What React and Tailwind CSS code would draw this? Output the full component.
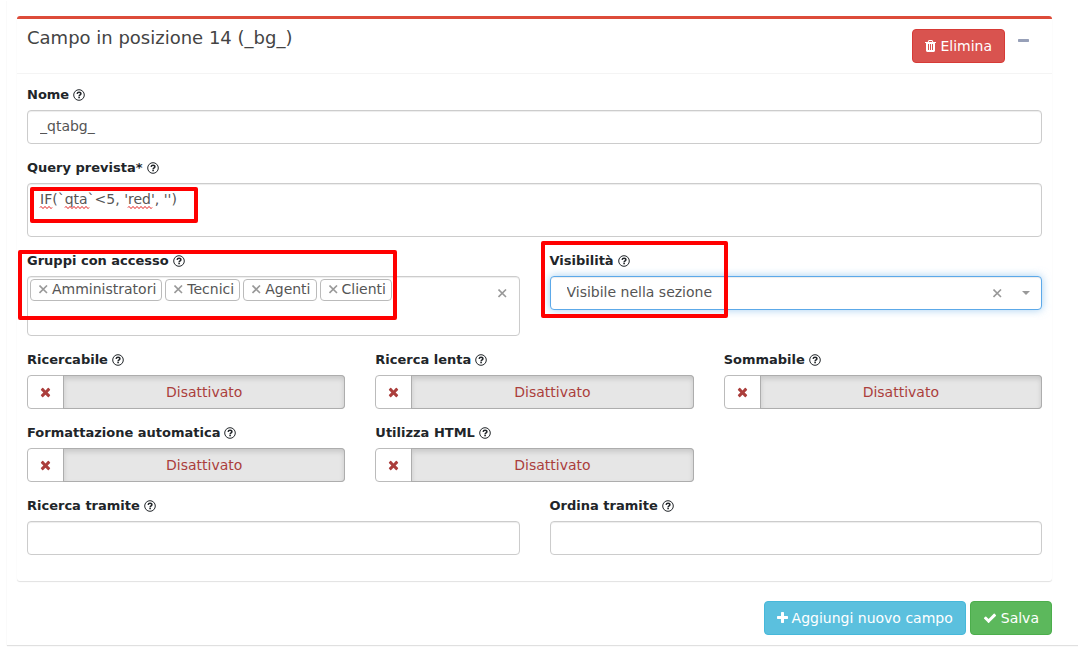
import React, { useState } from "react";

const ICONS = {
  plus: {
    box: "192 0 1408 1792",
    width: "w-[11px]",
    d: "M1600 736v192q0 40-28 68t-68 28h-416v416q0 40-28 68t-68 28h-192q-40 0-68-28t-28-68v-416h-416q-40 0-68-28t-28-68v-192q0-40 28-68t68-28h416v-416q0-40 28-68t68-28h192q40 0 68 28t28 68v416h416q40 0 68 28t28 68z",
  },
  times: {
    box: "192 0 1408 1792",
    width: "w-[11px]",
    d: "M1490 1322q0 40-28 68l-136 136q-28 28-68 28t-68-28l-294-294-294 294q-28 28-68 28t-68-28l-136-136q-28-28-28-68t28-68l294-294-294-294q-28-28-28-68t28-68l136-136q28-28 68-28t68 28l294 294 294-294q28-28 68-28t68 28l136 136q28 28 28 68t-28 68l-294 294 294 294q28 28 28 68z",
  },
  check: {
    box: "0 0 1792 1792",
    width: "w-[14px]",
    d: "M1671 566q0 40-28 68l-724 724-136 136q-28 28-68 28t-68-28l-136-136-362-362q-28-28-28-68t28-68l136-136q28-28 68-28t68 28l294 295 656-657q28-28 68-28t68 28l136 136q28 28 28 68z",
  },
  minus: {
    box: "192 0 1408 1792",
    width: "w-[11px]",
    d: "M1600 736v192q0 40-28 68t-68 28h-1216q-40 0-68-28t-28-68v-192q0-40 28-68t68-28h1216q40 0 68 28t28 68z",
  },
  trash: {
    box: "192 0 1408 1792",
    width: "w-[11px]",
    d: "M704 1376v-704q0-14-9-23t-23-9h-64q-14 0-23 9t-9 23v704q0 14 9 23t23 9h64q14 0 23-9t9-23zm256 0v-704q0-14-9-23t-23-9h-64q-14 0-23 9t-9 23v704q0 14 9 23t23 9h64q14 0 23-9t9-23zm256 0v-704q0-14-9-23t-23-9h-64q-14 0-23 9t-9 23v704q0 14 9 23t23 9h64q14 0 23-9t9-23zm-544-992h448l-48-117q-7-9-17-11h-317q-10 2-17 11zm928 32v64q0 14-9 23t-23 9h-96v948q0 83-47 143.5t-113 60.5h-832q-66 0-113-58.5t-47-141.5v-952h-96q-14 0-23-9t-9-23v-64q0-14 9-23t23-9h309l70-167q15-37 54-63t79-26h320q40 0 79 26t54 63l70 167h309q14 0 23 9t9 23z",
  },
};

function Icon({ name }) {
  const { box, width, d } = ICONS[name];
  return (
    <svg viewBox={box} className={`h-[14px] shrink-0 fill-current ${width}`} aria-hidden="true">
      <path d={d} />
    </svg>
  );
}

function HelpIcon() {
  return (
    <svg viewBox="0 0 12 13" className="h-[13px] w-3 shrink-0" fill="none" stroke="currentColor" aria-hidden="true">
      <circle cx="6" cy="6" r="5.3" strokeWidth="1" />
      <path d="M4.1 4.8C4.3 3.6 5 3.2 6 3.2c1.1 0 1.9.6 1.9 1.5 0 1.1-1.8 1.2-1.8 2.5" strokeWidth="1.5" />
      <path d="M6.1 7.8v1.5" strokeWidth="1.6" />
    </svg>
  );
}

function Cross() {
  return (
    <svg viewBox="0 0 9 9" className="size-[9px] shrink-0" stroke="currentColor" strokeWidth="1.6" aria-hidden="true">
      <path d="M0.5 0.5L8 8M8 0.5L0.5 8" />
    </svg>
  );
}

function Field({ id, label, children }) {
  return (
    <div className="relative min-w-0">
      <label htmlFor={id} className="mb-[5px] flex h-[19px] items-center gap-1 text-[13px] font-bold text-[#212529]">
        {label}
        <HelpIcon />
      </label>
      {children}
    </div>
  );
}

const BOX = "rounded border border-[#ccc] bg-white shadow-[inset_0_1px_1px_rgba(0,0,0,0.075)]";

function TextField({ id, label, value = "" }) {
  return (
    <Field id={id} label={label}>
      <input id={id} type="text" defaultValue={value} className={`${BOX} block h-[34px] w-full px-3 pb-0.5 text-[#555] outline-none`} />
    </Field>
  );
}

function Toggle({ id, label }) {
  const [on, setOn] = useState(false);
  return (
    <Field id={id} label={label}>
      <input id={id} type="checkbox" className="peer sr-only" checked={on} onChange={() => setOn(!on)} />
      <label
        htmlFor={id}
        className="flex h-[34px] cursor-pointer rounded border border-[#bbb] bg-white text-[#ab3e3c] peer-focus-visible:border-[#66afe9]"
      >
        <span className="flex w-9 shrink-0 items-center justify-center border-r border-[#adadad]">
          <Icon name="times" />
        </span>
        <span className="flex flex-1 items-center justify-center rounded-r-[3px] bg-[#e6e6e6] shadow-[inset_0_3px_5px_rgba(0,0,0,0.125),0_0_0_1px_#adadad]">
          {on ? "Attivato" : "Disattivato"}
        </span>
      </label>
    </Field>
  );
}

function Highlight({ className }) {
  return <div aria-hidden="true" className={`pointer-events-none absolute rounded-[2px] border-4 border-[#ff0000] ${className}`} />;
}

const squiggle = (x, width) => {
  let d = `M${x} 2.5`;
  for (let i = 0; i < width; i += 4) d += "q1 -2 2 0t2 0";
  return d;
};

function Button({ icon, tone, children }) {
  return (
    <button type="button" className={`flex h-[34px] items-center gap-1 rounded border px-3 text-white ${tone}`}>
      <Icon name={icon} />
      {children}
    </button>
  );
}

export default function App() {
  const [groups, setGroups] = useState(["Amministratori", "Tecnici", "Agenti", "Clienti"]);
  return (
    <main className="bg-white pb-1 pl-[7px] font-['DejaVu_Sans',sans-serif] text-sm text-[#444]">
      <div className="bg-white pr-[26px] pb-2.5 pl-2.5 pt-4 shadow-[0_1px_1px_rgba(0,0,0,0.12)]">
        <section className="rounded-[3px] border-t-[3px] border-[#dd4b39] bg-white shadow-[0_1px_1px_rgba(0,0,0,0.12)]">
          <header className="flex h-[55px] items-start border-b border-[#f4f4f4] px-2.5 pt-2.5">
            <h3 className="flex-1 text-lg leading-[18px]">Campo in posizione 14 (_bg_)</h3>
            <Button icon="trash" tone="border-[#d73a36] bg-[#d9534f]">
              Elimina
            </Button>
            <button type="button" aria-label="Comprimi" className="px-[13px] pt-[5px] text-[#97a0b8]">
              <Icon name="minus" />
            </button>
          </header>

          <form className="flex flex-col gap-[15px] px-2.5 pt-3 pb-[26px]" onSubmit={(e) => e.preventDefault()}>
            <TextField id="nome" label="Nome" value="_qtabg_" />

            <Field id="query" label="Query prevista*">
              <div className="relative">
                <textarea
                  id="query"
                  spellCheck={false}
                  defaultValue={"IF(`qta`<5, 'red', '')"}
                  className={`${BOX} block h-[54px] w-full resize-none px-3 py-[5px] leading-5 text-[#555] outline-none`}
                />
                <svg className="pointer-events-none absolute top-[22px] left-0 h-1 w-40" fill="none" stroke="#e00000" aria-hidden="true">
                  <path d={squiggle(13, 12)} />
                  <path d={squiggle(38, 24)} />
                  <path d={squiggle(101, 24)} />
                </svg>
                <Highlight className="top-1 left-[3px] h-9 w-[168px]" />
              </div>
            </Field>

            <div className="grid grid-cols-2 items-start gap-x-[30px]">
              <Field id="gruppi" label="Gruppi con accesso">
                <div className={`${BOX} flex h-[60px] items-start`}>
                  <div className="flex min-w-0 flex-1 flex-wrap gap-x-[3px] p-0.5">
                    {groups.map((g) => (
                      <span key={g} className="flex h-[22px] items-center gap-1 rounded border border-[#bbb] pr-[5px] pb-0.5 pl-2 text-[#555]">
                        <button
                          type="button"
                          aria-label={`Rimuovi ${g}`}
                          className="text-[#999]"
                          onClick={() => setGroups(groups.filter((x) => x !== g))}
                        >
                          <Cross />
                        </button>
                        {g}
                      </span>
                    ))}
                    <input id="gruppi" type="text" className="h-6 w-full px-2 outline-none" />
                  </div>
                  <button type="button" aria-label="Rimuovi tutti i gruppi" className="px-3 py-3 text-[#999]" onClick={() => setGroups([])}>
                    <Cross />
                  </button>
                </div>
                <Highlight className="-top-0.5 -left-[9px] h-[70px] w-[379px]" />
              </Field>

              <Field id="visibilita" label="Visibilità">
                <div className="flex h-[34px] items-center rounded border border-[#5ca9e9] bg-white shadow-[inset_0_1px_1px_rgba(0,0,0,0.075),0_0_8px_rgba(102,175,233,0.6)]">
                  <select id="visibilita" className="h-full min-w-0 flex-1 appearance-none px-4 pb-0.5 text-[#555] outline-none">
                    <option>Visibile nella sezione</option>
                  </select>
                  <button type="button" aria-label="Cancella selezione" className="px-1 text-[#999]">
                    <Cross />
                  </button>
                  <svg viewBox="0 0 8 4" className="mr-[11px] ml-4 h-1 w-2 fill-[#999]" aria-hidden="true">
                    <path d="M0 0h8L4 4z" />
                  </svg>
                </div>
                <Highlight className="-top-[11px] -left-[9px] h-[77px] w-[187px]" />
              </Field>
            </div>

            <div className="grid grid-cols-3 gap-x-[30px] gap-y-[15px]">
              <Toggle id="ricercabile" label="Ricercabile" />
              <Toggle id="lenta" label="Ricerca lenta" />
              <Toggle id="sommabile" label="Sommabile" />
              <Toggle id="formattazione" label="Formattazione automatica" />
              <Toggle id="html" label="Utilizza HTML" />
            </div>

            <div className="grid grid-cols-2 gap-x-[30px]">
              <TextField id="ricerca" label="Ricerca tramite" />
              <TextField id="ordina" label="Ordina tramite" />
            </div>
          </form>
        </section>

        <footer className="flex justify-end gap-1 pt-5">
          <Button icon="plus" tone="border-[#46b8da] bg-[#5bc0de]">
            Aggiungi nuovo campo
          </Button>
          <Button icon="check" tone="border-[#4cae4c] bg-[#5cb85c]">
            Salva
          </Button>
        </footer>
      </div>
    </main>
  );
}
